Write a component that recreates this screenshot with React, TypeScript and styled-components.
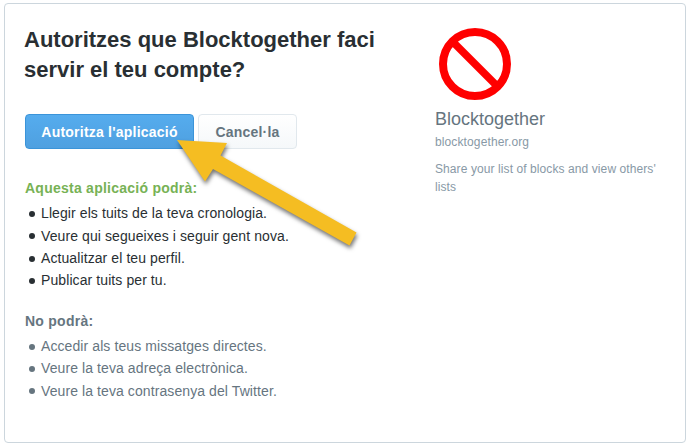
import React from 'react';
import styled, { createGlobalStyle } from 'styled-components';

const GlobalStyle = createGlobalStyle`
  * { box-sizing: border-box; }
  body {
    margin: 0;
    background: #fff;
    font-family: "Liberation Sans", Arial, sans-serif;
    font-size: 14px;
    color: #292f33;
  }
`;

const Page = styled.div`
  position: relative;
  height: 448px;
  padding: 3px 3px 5px 4px;
`;

const Card = styled.main`
  display: grid;
  grid-template-columns: 390px 1fr;
  column-gap: 20px;
  height: 440px;
  padding: 20px 19px 0 20px;
  border: 1px solid #ccd6dd;
  border-radius: 4px;
`;

const Authorization = styled.section`
  display: flex;
  flex-direction: column;
`;

const Title = styled.h1`
  margin: 1px 0 0 -1px;
  font-size: 22px;
  line-height: 30px;
  font-weight: 700;
  white-space: nowrap;
`;

const Actions = styled.div`
  display: flex;
  gap: 4px;
  margin-top: 29px;
`;

const Button = styled.button<{ $primary?: boolean }>`
  width: ${({ $primary }) => ($primary ? '169px' : '99px')};
  height: 35px;
  padding: 1px 0 0;
  border: 1px solid ${({ $primary }) => ($primary ? '#3b94d9' : '#e1e8ed')};
  border-radius: 4px;
  background: ${({ $primary }) =>
    $primary ? 'linear-gradient(#55acee, #4fa0e0)' : 'linear-gradient(#fff, #f5f8fa)'};
  color: ${({ $primary }) => ($primary ? '#fff' : '#66757f')};
  font: 700 14px/20px "Liberation Sans", Arial, sans-serif;
  letter-spacing: 0.22px;
  white-space: nowrap;
`;

const Permissions = styled.div<{ $denied?: boolean }>`
  margin-top: ${({ $denied }) => ($denied ? '18.2px' : '28.2px')};
  color: ${({ $denied }) => ($denied ? '#66757f' : '#292f33')};
`;

const PermissionTitle = styled.h2<{ $allowed?: boolean }>`
  margin: 0;
  font-size: 14px;
  line-height: 22px;
  letter-spacing: 0.25px;
  color: ${({ $allowed }) => ($allowed ? '#77b255' : 'inherit')};
`;

const PermissionList = styled.ul`
  margin: 3px 0 0;
  padding: 0;
  list-style: none;
`;

const Permission = styled.li`
  display: flex;
  align-items: center;
  height: 22.4px;
  padding-left: 4px;
  line-height: 22.4px;
  letter-spacing: 0.09px;
  white-space: nowrap;

  &::before {
    content: '';
    width: 6px;
    height: 6px;
    margin: 1px 6px 0 0;
    border-radius: 50%;
    background: currentColor;
  }
`;

const AppInfo = styled.aside`
  padding-top: 4px;
  color: #8899a6;
  font-size: 12px;
  line-height: 18px;
`;

const Logo = styled.svg`
  display: block;
  width: 72px;
  height: 72px;
  margin-left: 4px;
`;

const AppName = styled.h3`
  margin: 7px 0 0;
  color: #66757f;
  font-size: 18px;
  line-height: 24px;
  font-weight: 400;
`;

const AppLink = styled.div`
  margin-top: 2px;
  letter-spacing: 0.12px;
`;

const Description = styled.p`
  margin: 9px 0 0;
  letter-spacing: 0.09px;
`;

const Pointer = styled.svg`
  position: absolute;
  left: 170px;
  top: 132px;
  pointer-events: none;
  filter: drop-shadow(1px 3px 2px rgba(0, 0, 0, 0.55));
`;

const allowed = [
  'Llegir els tuits de la teva cronologia.',
  'Veure qui segueixes i seguir gent nova.',
  'Actualitzar el teu perfil.',
  'Publicar tuits per tu.',
];

const denied = [
  'Accedir als teus missatges directes.',
  'Veure la teva adreça electrònica.',
  'Veure la teva contrasenya del Twitter.',
];

export default function App() {
  return (
    <Page>
      <GlobalStyle />
      <Card>
        <Authorization>
          <Title>
            Autoritzes que Blocktogether faci
            <br />
            servir el teu compte?
          </Title>
          <Actions>
            <Button $primary>Autoritza l'aplicació</Button>
            <Button>Cancel·la</Button>
          </Actions>
          <Permissions>
            <PermissionTitle $allowed>Aquesta aplicació podrà:</PermissionTitle>
            <PermissionList>
              {allowed.map((text) => <Permission key={text}>{text}</Permission>)}
            </PermissionList>
          </Permissions>
          <Permissions $denied>
            <PermissionTitle>No podrà:</PermissionTitle>
            <PermissionList>
              {denied.map((text) => <Permission key={text}>{text}</Permission>)}
            </PermissionList>
          </Permissions>
        </Authorization>
        <AppInfo>
          <Logo viewBox="0 0 72 72" fill="none" stroke="#f00" strokeWidth="8">
            <circle cx="36" cy="36" r="32" />
            <path d="M13.5 13.5 58.5 58.5" strokeWidth="7.5" />
          </Logo>
          <AppName>Blocktogether</AppName>
          <AppLink>blocktogether.org</AppLink>
          <Description>Share your list of blocks and view others' lists</Description>
        </AppInfo>
      </Card>
      <Pointer width="196" height="124" viewBox="170 132 196 124" aria-hidden="true">
        <path d="M177 140 227 143 220.5 155.5 356.5 232.5 349.5 245.5 213 169 205 181.5Z" fill="#f5bd22" />
      </Pointer>
    </Page>
  );
}
